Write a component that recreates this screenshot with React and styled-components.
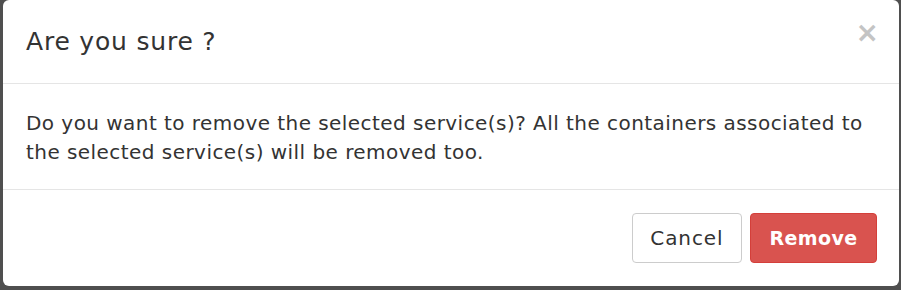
import React from 'react'
import styled, { createGlobalStyle } from 'styled-components'

const GlobalStyle = createGlobalStyle`
  html, body {
    margin: 0;
    padding: 0;
    background: #4f4f4f;
  }
  body {
    font-family: "DejaVu Sans", "Open Sans", sans-serif;
  }
`

const Backdrop = styled.div`
  width: 901px;
  height: 290px;
  box-sizing: border-box;
  padding: 0 2px 4px 3px;
  background: #4f4f4f;
`

const Modal = styled.div`
  height: 100%;
  background: #fff;
  border-radius: 6px;
  display: flex;
  flex-direction: column;
  color: #333;
`

const Header = styled.div`
  height: 84px;
  flex: none;
  box-sizing: border-box;
  display: flex;
  align-items: center;
  justify-content: space-between;
  padding: 0 20px 0 23px;
  border-bottom: 1px solid #e5e5e5;
`

const Title = styled.h4`
  margin: 0;
  font-size: 25px;
  font-weight: 400;
  letter-spacing: 0.8px;
`

const Close = styled.button`
  border: 0;
  background: none;
  padding: 0;
  margin-top: -18px;
  color: #c4c4c4;
  font-family: inherit;
  font-size: 28px;
  font-weight: 700;
  line-height: 1;
  cursor: pointer;
`

const Body = styled.div`
  flex: none;
  padding: 25px 23px 22px;
  font-size: 20px;
  line-height: 29px;
  letter-spacing: 0.45px;
  border-bottom: 1px solid #e5e5e5;
`

const Footer = styled.div`
  flex: 1;
  display: flex;
  align-items: center;
  justify-content: flex-end;
  gap: 8px;
  padding: 0 22px;
`

const Button = styled.button`
  height: 50px;
  padding: 0 ${p => (p.$danger ? '18.5px' : '17.5px')};
  border-radius: 4px;
  font-family: inherit;
  font-size: ${p => (p.$danger ? '19px' : '20px')};
  font-weight: ${p => (p.$danger ? 700 : 400)};
  letter-spacing: ${p => (p.$danger ? '0.4px' : '0.9px')};
  border: 1px solid ${p => (p.$danger ? '#d43f3a' : '#ccc')};
  background: ${p => (p.$danger ? '#d9534f' : '#fff')};
  color: ${p => (p.$danger ? '#fff' : '#333')};
  cursor: pointer;
`

export default function App() {
  return (
    <>
      <GlobalStyle />
      <Backdrop>
        <Modal>
          <Header>
            <Title>Are you sure ?</Title>
            <Close aria-label="Close">×</Close>
          </Header>
          <Body>
            Do you want to remove the selected service(s)? All the containers associated to
            the selected service(s) will be removed too.
          </Body>
          <Footer>
            <Button>Cancel</Button>
            <Button $danger>Remove</Button>
          </Footer>
        </Modal>
      </Backdrop>
    </>
  )
}
